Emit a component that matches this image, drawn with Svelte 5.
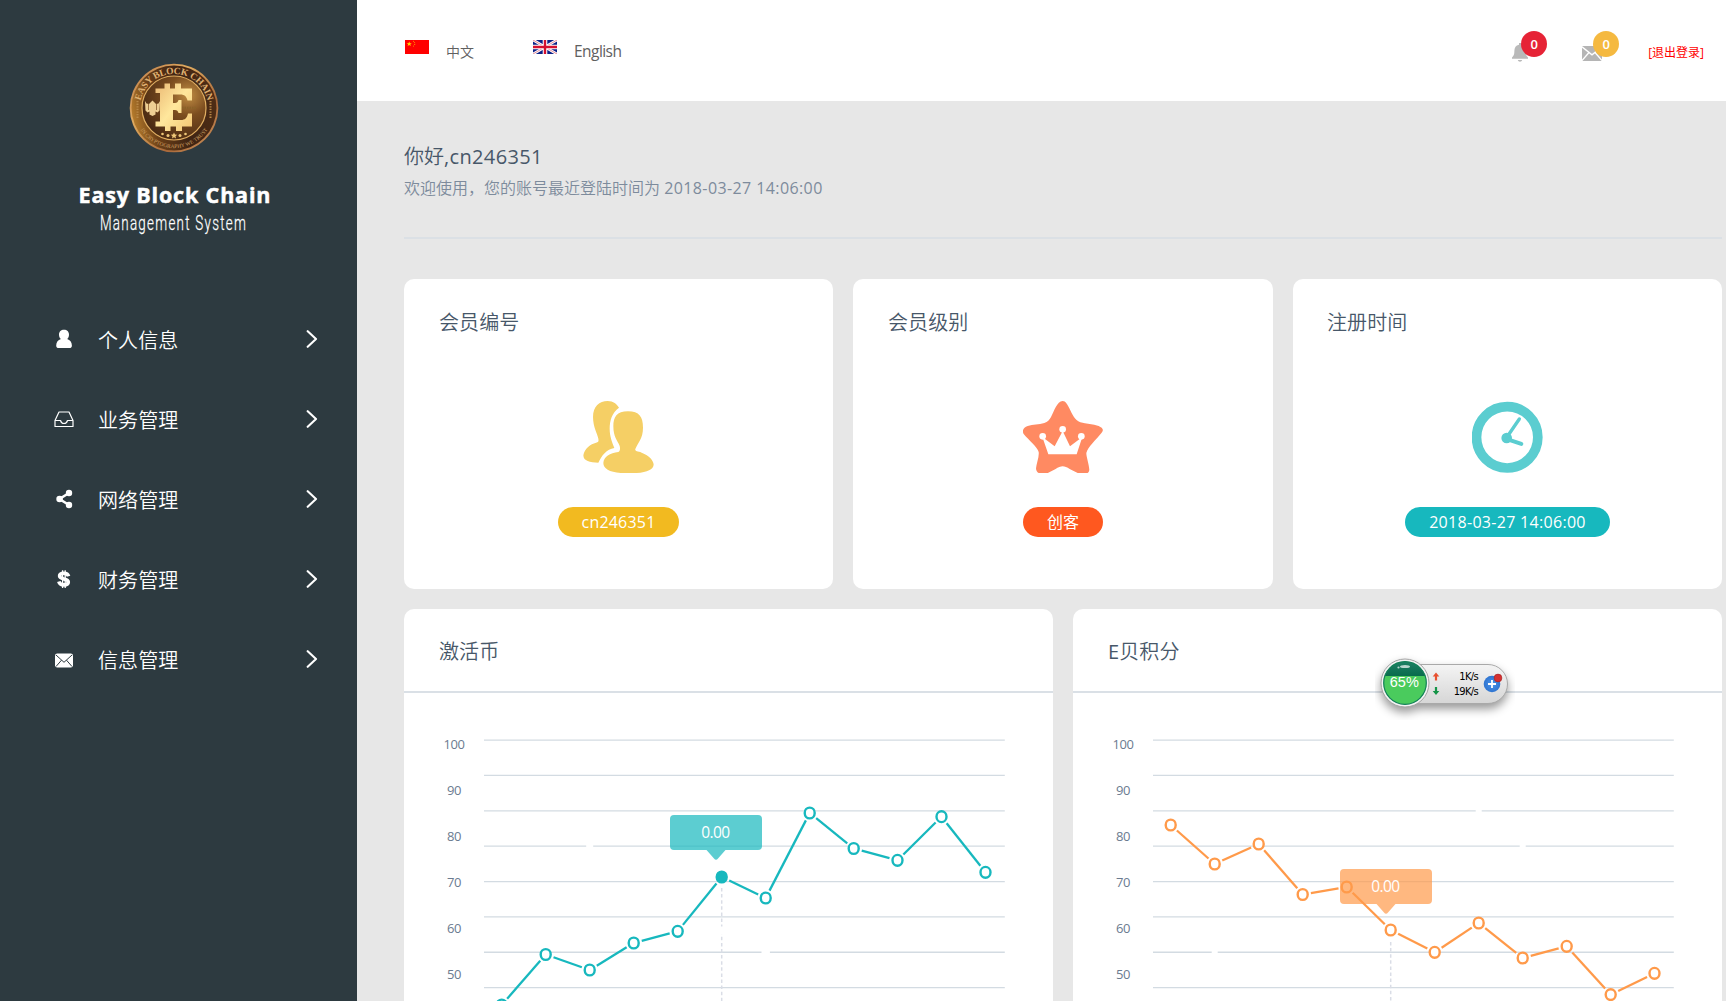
<script>
  const menu = [
    { icon: 'user', label: '个人信息' },
    { icon: 'inbox', label: '业务管理' },
    { icon: 'share', label: '网络管理' },
    { icon: 'dollar', label: '财务管理' },
    { icon: 'mail', label: '信息管理' }
  ];

  const stats = [
    { kind: 'users', title: '会员编号', value: 'cn246351' },
    { kind: 'star', title: '会员级别', value: '创客' },
    { kind: 'clock', title: '注册时间', value: '2018-03-27 14:06:00' }
  ];

  const charts = [
    {
      tone: 'teal',
      prefix: '',
      title: '激活币',
      active: 5,
      points: [[97.7, 312], [141.7, 261.5], [185.7, 277], [229.7, 250], [273.7, 238.3], [317.7, 184], [361.7, 205], [405.7, 120], [449.7, 155.5], [493.5, 167.3], [537.5, 123.7], [581.5, 179.3]],
      gaps: [[185.7, 153, 3.5], [361.7, 259.3, 4.2], [317.7, 237.5, 4]],
      guide: [317.7, 195],
      tip: [266, 122]
    },
    {
      tone: 'orange',
      prefix: 'E',
      title: '贝积分',
      active: -1,
      points: [[97.7, 132], [141.7, 171], [185.7, 151], [229.7, 201.5], [273.7, 194], [317.7, 237], [361.7, 259.3], [405.7, 230], [449.7, 265], [493.7, 253.3], [537.7, 301.6], [581.5, 280.3]],
      gaps: [[141.7, 259.3, 3], [405.7, 117.7, 3], [449.7, 153, 3]],
      guide: [317.7, 249],
      tip: [267, 176]
    }
  ];

  const grid = Array.from({ length: 8 }, (_, i) => 47.1 + i * 35.36);
  const ticks = [100, 90, 80, 70, 60, 50];

  // Line pieces stop short of the markers on both ends.
  function segments(points) {
    return points.slice(1).map(([x2, y2], i) => {
      const [x1, y1] = points[i];
      const len = Math.hypot(x2 - x1, y2 - y1);
      const dx = ((x2 - x1) / len) * 8.3;
      const dy = ((y2 - y1) / len) * 8.3;
      return { x1: x1 + dx, y1: y1 + dy, x2: x2 - dx, y2: y2 - dy };
    });
  }
</script>

<div class="page">
  <aside class="sidebar">
    <svg class="coin" viewBox="0 0 90 90" width="90" height="90">
      <defs>
        <linearGradient id="rim" x1="0" y1="0" x2="1" y2="1">
          <stop offset="0" stop-color="#b87648" />
          <stop offset=".35" stop-color="#e0ab60" />
          <stop offset=".7" stop-color="#a8683a" />
          <stop offset="1" stop-color="#d39a60" />
        </linearGradient>
        <linearGradient id="band" x1="0" y1=".6" x2="1" y2=".4">
          <stop offset="0" stop-color="#b77d2c" />
          <stop offset=".25" stop-color="#6b3f17" />
          <stop offset=".6" stop-color="#3f2413" />
          <stop offset="1" stop-color="#4e2d15" />
        </linearGradient>
        <radialGradient id="face" cx=".72" cy=".3" r=".8">
          <stop offset="0" stop-color="#c08d44" />
          <stop offset=".4" stop-color="#7c4d1f" />
          <stop offset="1" stop-color="#472812" />
        </radialGradient>
        <linearGradient id="gold" x1="0" y1="0" x2="1" y2="1">
          <stop offset="0" stop-color="#eab874" />
          <stop offset=".5" stop-color="#ffe79c" />
          <stop offset="1" stop-color="#f3c673" />
        </linearGradient>
        <path id="arcTop" d="M10.800 45a34.200 34.200 0 0 1 68.400 0" />
        <path id="arcBottom" d="M5 45a40 40 0 0 0 80 0" />
      </defs>
      <circle cx="45" cy="45" r="44.3" fill="url(#rim)" />
      <circle cx="45" cy="45" r="42.500" fill="url(#band)" />
      <circle cx="45" cy="45" r="32" fill="url(#face)" stroke="#e0ae62" stroke-width="1.2" />
      <text class="arc-name"><textPath href="#arcTop" startOffset="50%">EASY BLOCK CHAIN</textPath></text>
      <text class="arc-motto"><textPath href="#arcBottom" startOffset="50%">IN CRYPTOGRAPHY WE TRUST</textPath></text>
      <path d="M8.500 38v18M81.500 38v18" stroke="#b98746" stroke-width="2" stroke-dasharray="1.300 1.300" />
      <path fill="url(#gold)" d="M26.500 25.500h9v-5h5.500v5h5v-5h6v5h11v12h-4.500c-1-4-3-6-7-6h-7.500v8.500h2c2 0 3-1 3.500-3h3v13h-3c-.5-2-1.500-3-3.500-3h-2v10h8c4 0 6-2 7-6.500h4v13h-10v4.500h-6v-4.500h-5.500v4.500h-5.500v-4.500h-9.500v-5h4.500v-28.500h-4.500z" />
      <path fill="#eecf94" d="M16 38l1.500 2.500L20 41l2-2 1.500-1.500L25 39l2 2 2.500-.5L31 38l-.5 9.500-2 2-2-1v3L23.500 53 20.500 51.500v-3l-2 1-2-2z" />
      <path d="M19.500 41v6M27.500 41v6" stroke="#7a4a20" stroke-width=".7" />
      <path d="M53 45h15" stroke="#8a6228" stroke-width="2.500" stroke-dasharray="1.500 1" />
      <g fill="#f0c878">
        <path d="M45 69.500l1 2 2.200.2-1.700 1.500.5 2.200-2-1.200-2 1.200.5-2.200-1.700-1.500 2.200-.2z" />
        <circle cx="33.500" cy="71" r="1.300" /><circle cx="39" cy="72.500" r="1.500" />
        <circle cx="51" cy="72.500" r="1.500" /><circle cx="56.500" cy="71" r="1.300" />
      </g>
    </svg>
    <svg class="brand" width="230" height="60" viewBox="0 0 230 60">
      <text class="brand-name" x="18.500" y="22.500" textLength="192">Easy Block Chain</text>
      <text class="brand-sub" transform="translate(40 50.300) scale(.66 1)" textLength="221">Management System</text>
    </svg>

    <nav>
      {#each menu as item}
        <a class="item" href="#{item.icon}">
          <svg class="glyph" width="20" height="20" viewBox="0 0 20 20">
            {#if item.icon === 'user'}
              <path fill="#fff" d="M10 .8c3 0 5 2 5 4.900 0 1.800-.7 3.300-1.800 4.300 2.800 1 4.700 3.200 4.700 6.400 0 1.800-1 2.600-2.600 2.600H4.800C3.200 19 2.200 18.200 2.200 16.400c0-3.200 1.900-5.400 4.700-6.400C5.700 9 5 7.500 5 5.700 5 2.800 7 .8 10 .8z" />
            {:else if item.icon === 'inbox'}
              <path fill="none" stroke="#fff" stroke-width="1.200" stroke-linejoin="round" d="M1 11.500L5 3h10l4 8.500V17.500H1zM1 11.500h5.500c.5 2 1.500 3 3.500 3s3-1 3.500-3H19" />
            {:else if item.icon === 'share'}
              <path fill="none" stroke="#fff" stroke-width="2.600" d="M15 4L5.500 10l9.500 6" />
              <circle cx="15" cy="4" r="3.200" fill="#fff" /><circle cx="5.600" cy="10" r="3.300" fill="#fff" /><circle cx="15" cy="16" r="3.200" fill="#fff" />
            {:else if item.icon === 'dollar'}
              <path fill="none" stroke="#fff" stroke-width="3.600" d="M14.600 7.300C14 5.200 12.500 4.300 9.800 4.300c-2.600 0-4.200 1-4.200 2.800 0 4 8.700 1.600 8.700 5.900 0 1.900-1.700 2.900-4.500 2.900s-4.300-1-5-3.400" />
              <path stroke="#fff" stroke-width="1.300" d="M8.600 1.300v17.600M11.200 1.300v17.600" />
            {:else}
              <rect x="1" y="4.500" width="18" height="14" rx="2.200" fill="#fff" />
              <path fill="none" stroke="#2d3a40" stroke-width="1" d="M2 6l8 7.300 8-7.300M2 17.500l5.500-6.300M18 17.500l-5.500-6.300" />
            {/if}
          </svg>
          <span>{item.label}</span>
          <svg class="chevron" width="12" height="18" viewBox="0 0 12 18">
            <path fill="none" stroke="#fff" stroke-width="2.100" stroke-linecap="round" stroke-linejoin="round" d="M1.700 1.200L10 9l-8.300 7.800" />
          </svg>
        </a>
      {/each}
    </nav>
  </aside>

  <div class="main">
    <header>
      <div class="langs">
        <a class="lang" href="#zh">
          <svg width="24" height="14" viewBox="0 0 24 14">
            <path fill="#f00" d="M0 0h24v14H0z" />
            <path fill="#fd0" d="M4.200 1.500l.7 1.700h1.900L5.300 4.300l.5 1.700-1.600-1-1.600 1 .5-1.700L1.600 3.200h1.900z" />
            <path fill="none" stroke="#f90" stroke-dasharray="1 .9" d="M8 1c2.500 1.300 2.500 4 0 5.500" />
          </svg>
          <span class="zh">中文</span>
        </a>
        <a class="lang" href="#en">
          <svg width="24" height="14" viewBox="0 0 24 14">
            <path fill="#0c2187" d="M0 0h24v14H0z" />
            <path stroke="#fff" stroke-width="2.800" d="M0 0l24 14M24 0L0 14" />
            <path stroke="#dc5a6c" stroke-width=".7" d="M0 0l24 14M24 0L0 14" />
            <path stroke="#fff" stroke-width="4.600" d="M12 0v14M0 7h24" />
            <path stroke="#d40f2f" stroke-width="2.400" d="M12 0v14M0 7h24" />
          </svg>
          <span>English</span>
        </a>
      </div>
      <div class="tools">
        <div class="tool bell">
          <svg width="16" height="19" viewBox="0 0 16 19">
            <path fill="#b9b9b9" d="M7 0h2v1.800c3.200.6 4.600 3 4.600 6 0 3.700.8 5.300 2.400 6.700v1.300H0v-1.300c1.600-1.400 2.400-3 2.400-6.700 0-3 1.400-5.400 4.600-6zM5.800 17h4.400c-.4 1.200-1 1.700-2.200 1.700S6.200 18.200 5.800 17z" />
          </svg>
          <b class="red">0</b>
        </div>
        <div class="tool letter">
          <svg width="20" height="15" viewBox="0 0 20 15">
            <rect width="20" height="15" rx="1" fill="#b5b5b5" />
            <path fill="none" stroke="#fff" stroke-width="1.300" d="M0 .8l10 8 10-8M0 14.500l7-8M20 14.500l-7-8" />
          </svg>
          <b class="amber">0</b>
        </div>
        <a class="logout" href="#logout">[退出登录]</a>
      </div>
    </header>

    <main>
      <section class="welcome">
        <h1>你好<span>,cn246351</span></h1>
        <p>欢迎使用，您的账号最近登陆时间为 <span>2018-03-27 14:06:00</span></p>
      </section>

      <section class="stats">
        {#each stats as s}
          <article class="card stat {s.kind}">
            <h2>{s.title}</h2>
            {#if s.kind === 'users'}
              <svg width="70.700" height="72.300" viewBox="549 392 212 217">
                <path fill="#f5cf65" d="M579 440C579 408 598 392 623 392C640 392 651 402 657 412C636 428 629 450 629 475C629 500 637 517 643 533C620 536 604 557 595 577C570 576 550 573 550 555C553 535 572 521 588 517C594 516 597 513 595 505C592 490 579 470 579 440Z" />
                <path fill="#f5cf65" d="M640 468C640 440 650 423 684 423C718 423 729 440 729 472C729 505 713 518 706 536C704 543 712 543 725 547C748 555 761 572 761 583C759 600 735 609 685 609C635 609 610 598 610 578C611 560 630 547 655 545C660 544 661 535 659 527C652 510 640 500 640 468Z" />
              </svg>
            {:else if s.kind === 'star'}
              <svg width="80" height="72.300" viewBox="518 392 240 217">
                <path fill="#ff8a62" d="M637 392C646 392 651 402 657 414C666 432 673 450 690 456C708 461 728 461 745 467C756 472 762 478 754 487C738 507 712 530 708 548C708 560 716 582 717 598C716 612 700 614 685 609C668 604 650 588 637 588C624 588 606 604 590 609C570 614 557 608 557 594C558 580 567 560 565 545C561 530 536 510 520 491C514 480 520 471 532 467C548 462 565 463 582 458C592 455 597 449 602 440C611 424 620 392 637 392Z" />
                <path fill="#fff" d="M576 500L594 552H679L696 500L659 528L637 482L613 528Z" />
                <circle cx="637" cy="477" r="10" fill="#fff" /><circle cx="577" cy="498" r="10" fill="#fff" /><circle cx="693" cy="498" r="10" fill="#fff" />
              </svg>
            {:else}
              <svg width="71.700" height="72.300" viewBox="577 393 215 217">
                <circle cx="682.500" cy="502" r="92" fill="none" stroke="#5bcdd0" stroke-width="29" />
                <circle cx="681" cy="504" r="16" fill="#5bcdd0" />
                <path stroke="#5bcdd0" stroke-width="10" stroke-linecap="round" d="M684 498L719 447" />
                <path stroke="#5bcdd0" stroke-width="12" stroke-linecap="round" d="M684 508L725 522" />
              </svg>
            {/if}
            <span class="pill">{s.value}</span>
          </article>
        {/each}
      </section>

      <section class="charts">
        {#each charts as c}
          <article class="card chart {c.tone}">
            <h2><span>{c.prefix}</span>{c.title}</h2>
            <svg width="649" height="308" viewBox="0 0 649 308">
              {#each grid as y}
                <path class="rule" d="M80 {y}H600.800" />
              {/each}
              <path class="guide" d="M{c.guide[0]} {c.guide[1]}V308" />
              {#each c.gaps as [x, y, r]}
                <rect class="gap" x={x - r} y={y - r} width={r * 2} height={r * 2} />
              {/each}
              {#each ticks as t, i}
                <text class="tick" x="50" y={55.900 + i * 46}>{t}</text>
              {/each}
              {#each segments(c.points) as s}
                <line class="series" x1={s.x1} y1={s.y1} x2={s.x2} y2={s.y2} />
              {/each}
              {#each c.points as [x, y], i}
                <ellipse class="dot" class:on={i === c.active} cx={x} cy={y} rx="5" ry="5.400" />
              {/each}
              <g transform="translate({c.tip[0]} {c.tip[1]})">
                <path class="tip" d="M4 0H88a4 4 0 0 1 4 4V31a4 4 0 0 1-4 4H55.500L48 43.500q-2 2.500-4 0L36.500 35H4a4 4 0 0 1-4-4V4a4 4 0 0 1 4-4z" />
                <text class="tip-value" x="45.500" y="23.300">0.00</text>
              </g>
            </svg>
          </article>
        {/each}
      </section>
    </main>
  </div>

  <div class="netspeed">
    <svg width="140" height="70" viewBox="0 0 140 70">
      <defs>
        <linearGradient id="shell" x1="0" y1="0" x2="0" y2="1">
          <stop offset="0" stop-color="#f4f4f4" /><stop offset="1" stop-color="#d6d6d6" />
        </linearGradient>
        <linearGradient id="deep" x1="0" y1="0" x2="0" y2="1">
          <stop offset="0" stop-color="#2f9078" /><stop offset="1" stop-color="#086b4c" />
        </linearGradient>
        <radialGradient id="blue"><stop offset="0" stop-color="#4b95ea" /><stop offset="1" stop-color="#2f74d0" /></radialGradient>
        <clipPath id="ball"><circle cx="30" cy="33" r="21.500" /></clipPath>
      </defs>
      <g class="shadow">
        <path fill="url(#shell)" stroke="#a9a9a9" d="M30 14.500h83a19.500 19.500 0 0 1 0 39H30z" />
        <circle cx="30" cy="33" r="24" fill="#f3f3f3" stroke="#a4a4a4" />
      </g>
      <g clip-path="url(#ball)">
        <path fill="#4acb5d" d="M0 0h60v60H0z" />
        <path fill="url(#deep)" d="M0 0h60v26H0z" />
        <ellipse cx="30" cy="16.500" rx="5" ry="1.600" fill="#fff" opacity=".7" />
        <circle cx="23.500" cy="17.500" r="1.100" fill="#fff" opacity=".7" />
      </g>
      <circle cx="30" cy="33" r="21.300" fill="none" stroke="#14805a" stroke-width="1.200" />
      <text class="percent" x="29.300" y="37.300">65%</text>
      <path fill="#e8502f" d="M61 22.500l3.300 4h-2.200v4h-2.200v-4h-2.200z" />
      <path fill="#159447" d="M61 45l3.300-4h-2.200v-4h-2.200v4h-2.200z" />
      <text class="rate" x="103" y="30.300">1K/s</text>
      <text class="rate" x="103" y="45.300">19K/s</text>
      <circle cx="117" cy="34" r="8.300" fill="url(#blue)" />
      <path stroke="#fff" stroke-width="1.800" d="M113 34h8M117 30v8" />
      <circle cx="123" cy="28" r="3.900" fill="#d63030" stroke="#9d2222" stroke-width=".6" />
    </svg>
  </div>
</div>

<style>
  :global(body) {
    margin: 0;
    background: #e7e7e7;
  }
  .page {
    display: flex;
    position: relative;
    width: 1726px;
    height: 1001px;
    overflow: hidden;
    font-family: 'Open Sans', 'Noto Sans CJK SC', sans-serif;
    font-weight: 350;
    background: #e7e7e7;
  }
  a { color: inherit; text-decoration: none; }
  h1, h2, p { margin: 0; font-weight: 350; }
  svg { display: block; flex: none; }

  .sidebar {
    display: flex;
    flex: none;
    flex-direction: column;
    align-items: center;
    box-sizing: border-box;
    width: 357px;
    padding-top: 63px;
    background: #2d3a40;
    color: #fff;
  }
  .coin { margin-right: 9px; }
  .arc-name { font: 700 9.500px 'Liberation Serif', serif; fill: #e0b272; text-anchor: middle; letter-spacing: -.2px; }
  .arc-motto { font: 5.500px 'Liberation Serif', serif; fill: #cc9f62; text-anchor: middle; }
  .brand { margin: 27px 8px 0 0; }
  .brand-name { font: 700 21.500px 'Open Sans', sans-serif; fill: #fff; stroke: #fff; stroke-width: .5px; }
  .brand-sub { font: 300 20.300px Roboto, sans-serif; fill: #fff; stroke: #fff; stroke-width: .25px; }
  nav { display: flex; flex-direction: column; width: 100%; margin-top: 59px; }
  .item {
    display: flex;
    align-items: center;
    height: 80px;
    padding: 0 39px 0 54px;
    font-size: 20px;
    letter-spacing: .1px;
  }
  .item span { flex: 1; padding: 0 0 0 24px; }

  .main { flex: 1; min-width: 0; }
  header {
    display: flex;
    justify-content: space-between;
    align-items: flex-start;
    box-sizing: border-box;
    height: 101px;
    padding: 31px 22px 0 48px;
    background: #fff;
  }
  .langs { display: flex; gap: 65px; padding-top: 9px; }
  .lang { display: flex; gap: 17px; color: #606060; font-size: 15.500px; line-height: 23px; letter-spacing: -.55px; font-weight: 400; }
  .lang .zh { font-size: 14px; line-height: 23px; letter-spacing: 0; font-weight: 350; margin-right: -6px; }
  .tools { display: flex; }
  .tool { position: relative; }
  .bell { width: 70px; padding-top: 12px; }
  .letter { width: 66px; padding-top: 15px; }
  .tool b {
    position: absolute;
    width: 26px;
    height: 26px;
    border-radius: 50%;
    color: #fff;
    font-size: 13px;
    font-weight: 600;
    line-height: 27px;
    text-align: center;
  }
  .red { left: 9px; top: 0; background: #e62336; }
  .amber { left: 11px; top: 0; background: #f5b940; }
  .logout { padding-top: 12px; color: #f00; font-size: 12px; font-weight: 400; line-height: 20px; }

  main { padding: 0 4px 0 47px; }
  .welcome { height: 138px; box-sizing: border-box; padding-top: 42px; border-bottom: 2px solid #dbe0e5; }
  h1 { color: #475769; font-size: 20px; line-height: 28px; }
  h1 span { font-weight: 400; letter-spacing: .35px; }
  .welcome p { color: #7d8b9c; font-size: 16px; line-height: 34px; }
  .welcome p span { letter-spacing: .4px; font-weight: 400; }

  .card { background: #fff; border-radius: 10px; overflow: hidden; }
  h2 { color: #475769; font-size: 20px; letter-spacing: .1px; }
  h2 span { font-weight: 400; }
  .stats { display: grid; grid-template-columns: 429px 420px 429px; gap: 20px; margin-top: 40px; }
  .stat { display: flex; flex-direction: column; align-items: center; height: 310px; }
  .stat h2 { align-self: stretch; height: 93px; padding: 29px 0 0 35px; line-height: 30px; box-sizing: border-box; margin-bottom: 29px; }
  .clock h2 { padding-left: 34px; }
  .pill {
    margin-top: 33.700px;
    padding: 0 24px;
    border-radius: 15px;
    color: #fff;
    font-size: 16px;
    font-weight: 400;
    line-height: 30px;
  }
  .users .pill { background: #f2ba20; letter-spacing: .2px; }
  .star .pill { background: #ff581f; }
  .clock .pill { background: #17b8be; letter-spacing: .3px; }

  .charts { display: grid; grid-template-columns: 649px 649px; gap: 20px; margin-top: 20px; }
  .chart { height: 420px; }
  .chart h2 { box-sizing: border-box; height: 84px; padding: 27px 0 0 35px; line-height: 31px; border-bottom: 2px solid #dae0e6; }
  .rule { stroke: #d3dbe2; stroke-width: 1.300; }
  .guide { stroke: #dadde6; stroke-width: 1.500; stroke-dasharray: 3.500 2.600; }
  .gap { fill: #fff; }
  .tick { fill: #6b7b90; font-size: 13px; font-weight: 400; text-anchor: middle; letter-spacing: -.4px; }
  .teal { --tone: #17b8be; }
  .orange { --tone: #ff9a4a; }
  .series { stroke: var(--tone); stroke-width: 2.300; }
  .dot { fill: #fff; stroke: var(--tone); stroke-width: 2.400; }
  .dot.on { fill: var(--tone); }
  .tip { fill: var(--tone); opacity: .7; }
  .tip-value { fill: #fff; font-size: 15.500px; font-weight: 400; text-anchor: middle; letter-spacing: -.6px; }

  .netspeed { position: absolute; left: 1375px; top: 650px; }
  .shadow { filter: drop-shadow(0 5px 5px rgba(0, 0, 0, .4)); }
  .percent { fill: #fff; font: 14.500px 'Liberation Sans', sans-serif; text-anchor: middle; }
  .rate { fill: #000; font: 10px 'DejaVu Sans', sans-serif; text-anchor: end; letter-spacing: -.7px; }
</style>
